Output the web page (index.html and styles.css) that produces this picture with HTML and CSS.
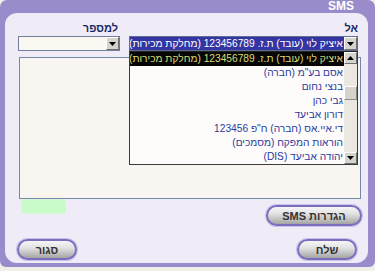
FILE: index.html
```html
<!DOCTYPE html>
<html lang="he">
<head>
<meta charset="utf-8">
<title>SMS</title>
<link rel="stylesheet" href="styles.css">
</head>
<body>
<div class="window">
  <div class="titlebar">SMS</div>
  <div class="panel">
    <div class="fields">
      <div class="field num-field">
        <div class="label" dir="rtl">למספר</div>
        <div class="select num-select">
          <span class="value"></span>
          <span class="drop"><svg width="7" height="4" viewBox="0 0 7 4"><path d="M0 0H7L3.5 4Z" fill="#000"/></svg></span>
        </div>
      </div>
      <div class="field to-field">
        <div class="label" dir="rtl">אל</div>
        <div class="select to-select">
          <span class="value" dir="rtl"><span class="hl">איציק לוי (עובד) ת.ז. 123456789 (מחלקת מכירות)</span></span>
          <span class="drop"><svg width="7" height="4" viewBox="0 0 7 4"><path d="M0 0H7L3.5 4Z" fill="#000"/></svg></span>
        </div>
      </div>
    </div>
    <div class="message"></div>
    <div class="mid-row">
      <div class="counter"></div>
      <button class="btn btn-wide" dir="rtl">הגדרות SMS</button>
    </div>
    <div class="bottom-row">
      <button class="btn">סגור</button>
      <button class="btn">שלח</button>
    </div>
    <div class="listbox">
      <div class="items">
        <div class="item selected" dir="rtl">איציק לוי (עובד) ת.ז. 123456789 (מחלקת מכירות)</div>
        <div class="item" dir="rtl">אסם בע"מ (חברה)</div>
        <div class="item" dir="rtl">בנצי נחום</div>
        <div class="item" dir="rtl">גבי כהן</div>
        <div class="item" dir="rtl">דורון אביעד</div>
        <div class="item" dir="rtl">די.איי.אס (חברה) ח"פ 123456</div>
        <div class="item" dir="rtl">הוראות המפקח (מסמכים)</div>
        <div class="item" dir="rtl">יהודה אביעד (DIS)</div>
      </div>
      <div class="scrollbar">
        <span class="sbtn"><svg width="7" height="4" viewBox="0 0 7 4"><path d="M0 4H7L3.5 0Z" fill="#000"/></svg></span>
        <span class="track"><span class="thumb"></span></span>
        <span class="sbtn"><svg width="7" height="4" viewBox="0 0 7 4"><path d="M0 0H7L3.5 4Z" fill="#000"/></svg></span>
      </div>
    </div>
  </div>
</div>
</body>
</html>
```

FILE: styles.css
```css
html, body {
  margin: 0;
  padding: 0;
}
body {
  width: 375px;
  height: 271px;
  background: #f1efe9;
  font-family: "Liberation Sans", "DejaVu Sans", Arial, sans-serif;
  overflow: hidden;
}
.window {
  width: 375px;
  height: 267px;
  background: #9a8cca;
  border-radius: 7px 7px 6px 6px;
  box-sizing: border-box;
  padding: 0 7px 0 5px;
}
.titlebar {
  height: 13px;
  line-height: 13px;
  font-size: 12px;
  font-weight: bold;
  color: #ffffff;
  text-align: right;
  padding-right: 14px;
}
.panel {
  position: relative;
  height: 250px;
  background: #efecf7;
  border-radius: 12px;
  box-sizing: border-box;
  padding-top: 9px;
}
.fields {
  display: flex;
  justify-content: space-between;
  margin: 0 10px 0 13px;
}
.field {
  display: flex;
  flex-direction: column;
}
.num-field { width: 102px; }
.to-field { width: 229px; }
.label {
  height: 13px;
  line-height: 13px;
  font-size: 11px;
  font-weight: bold;
  color: #1a2766;
  text-align: right;
  padding-right: 2px;
}
.to-field .label { padding-right: 0; }
.select {
  margin-top: 1px;
  height: 15px;
  box-sizing: border-box;
  border: 1px solid #5c6f92;
  display: flex;
  background: #ffffff;
}
.num-select {
  background: #fbf8f1;
  border-color: #6f7f9c;
}
.value {
  flex: 1;
  overflow: hidden;
  white-space: nowrap;
  display: flex;
  justify-content: flex-start;
}
.hl {
  background: #3434a2;
  color: #ffffff;
  font-size: 10.2px;
  line-height: 13px;
  padding: 0 1px;
}
.drop {
  width: 13px;
  height: 13px;
  box-sizing: border-box;
  background: #d6d3cc;
  border-top: 1px solid #ffffff;
  border-left: 1px solid #ffffff;
  border-right: 1px solid #6e6e6e;
  border-bottom: 1px solid #6e6e6e;
  display: flex;
  align-items: center;
  justify-content: center;
}
.message {
  margin: 6px 7px 0 14px;
  height: 142px;
  box-sizing: border-box;
  border: 1px solid #7189ab;
  background: #f9f5f0;
}
.mid-row {
  display: flex;
  justify-content: space-between;
  align-items: flex-start;
  margin: 0 6px 0 16px;
}
.counter {
  width: 45px;
  height: 15px;
  box-sizing: border-box;
  background: #c9fbc9;
  border: 1px solid #d8f6d8;
}
.btn {
  width: 60px;
  height: 21px;
  box-sizing: border-box;
  border: 2px solid #7c6ebf;
  border-radius: 11px;
  background: linear-gradient(#f6f6f6 0%, #e2e2e2 40%, #b4b4b4 85%, #a4a4a4 100%);
  box-shadow: 0 0 0 1px #c9c1e9;
  font-family: "Liberation Sans", "DejaVu Sans", Arial, sans-serif;
  font-size: 11px;
  font-weight: bold;
  color: #333333;
  padding: 0;
  line-height: 16px;
}
.btn-wide {
  width: 96px;
  margin-top: 6px;
}
.bottom-row {
  display: flex;
  justify-content: space-between;
  margin: 13px 11px 0 12px;
}
.listbox {
  position: absolute;
  left: 124px;
  top: 38px;
  width: 229px;
  height: 114px;
  box-sizing: border-box;
  border: 1px solid #3c3c3c;
  border-top-color: #222;
  background: #fdfcfa;
  display: flex;
}
.items {
  flex: 1;
  min-width: 0;
  overflow: hidden;
}
.item {
  height: 14px;
  line-height: 14px;
  font-size: 10.2px;
  color: #2b3a9e;
  white-space: nowrap;
  text-align: start;
  padding: 0 1px 0 0;
}
.item.selected {
  background: #060606;
  color: #dcdc72;
}
.scrollbar {
  width: 13px;
  flex: none;
  display: flex;
  flex-direction: column;
  background: #ebe8e2;
}
.sbtn {
  width: 13px;
  height: 12px;
  box-sizing: border-box;
  background: #d6d3cc;
  border-top: 1px solid #ffffff;
  border-left: 1px solid #ffffff;
  border-right: 1px solid #6e6e6e;
  border-bottom: 1px solid #6e6e6e;
  display: flex;
  align-items: center;
  justify-content: center;
}
.track {
  flex: 1;
  position: relative;
}
.thumb {
  position: absolute;
  left: 0;
  top: 22px;
  width: 13px;
  height: 14px;
  box-sizing: border-box;
  background: #d6d3cc;
  border-top: 1px solid #ffffff;
  border-left: 1px solid #ffffff;
  border-right: 1px solid #8a8a8a;
  border-bottom: 1px solid #8a8a8a;
}
```
